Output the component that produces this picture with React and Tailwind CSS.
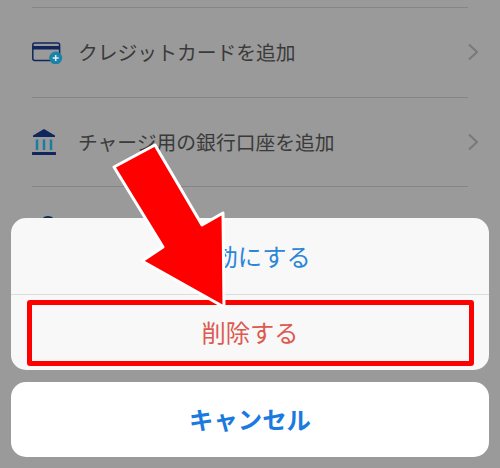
const jp = "font-['Noto_Sans_CJK_JP','Noto_Sans',sans-serif]";

function CardIcon() {
  return (
    <svg width="32" height="24" viewBox="0 0 32 24" className="shrink-0">
      <rect x="0.8" y="3" width="26.800" height="17.600" rx="2" fill="none" stroke="#10265c" strokeWidth="1.500" />
      <rect x="0.800" y="6" width="26.800" height="3.500" fill="#10265c" />
      <circle cx="23.700" cy="18" r="6.500" fill="#1a83a8" />
      <path d="M23.700 15v6M20.700 18h6" stroke="#e6eef2" strokeWidth="1.500" />
    </svg>
  );
}

function BankIcon() {
  return (
    <svg width="24" height="26" viewBox="0 0 24 26" className="shrink-0">
      <path d="M12 0 L23 6.500 L23 8 L1 8 L1 6.500 Z" fill="#10265c" />
      <path d="M5 10.500v10.500M12 10.500v10.500M19 10.500v10.500" stroke="#1a7da3" strokeWidth="2.500" />
      <rect x="0" y="23" width="24" height="3" rx="0.500" fill="#10265c" />
    </svg>
  );
}

// only the top of this one shows above the sheet
function RoundIcon() {
  return (
    <svg width="24" height="30" viewBox="0 0 24 30" className="shrink-0">
      <circle cx="16" cy="8" r="8" fill="#10265c" />
    </svg>
  );
}

function Chevron() {
  return (
    <svg width="10" height="18" viewBox="0 0 10 18" className="-mr-[10px] shrink-0">
      <path d="M1 1.500 L9 9 L1 16.500" fill="none" stroke="#797979" strokeWidth="2" />
    </svg>
  );
}

function Row({ icon, label }) {
  return (
    <div className="flex h-[89.5px] items-center border-b border-[#858585]">
      <div className="w-[46px]">{icon}</div>
      <span className="flex-1 text-[19.8px] text-[#3a3a3a]">{label}</span>
      {label && <Chevron />}
    </div>
  );
}

export default function App() {
  return (
    <div className={`relative h-[468px] w-[500px] overflow-hidden bg-[#9a9a9a] ${jp}`}>
      <div className="ml-8 mr-8 mt-[7px] border-t border-[#858585]">
        <Row icon={<CardIcon />} label="クレジットカードを追加" />
        <Row icon={<BankIcon />} label="チャージ用の銀行口座を追加" />
        <Row icon={<RoundIcon />} label="" />
      </div>

      <div className="absolute inset-x-[11px] bottom-[11px] flex flex-col gap-[12px]">
        <div className="rounded-[15px] bg-[#f8f8f8]">
          <div className="flex h-[77px] items-center justify-center border-b border-[#dcdcdc] text-[24.3px] text-[#2b86d8]">
            無効にする
          </div>
          <div className="flex h-[75px] items-center justify-center text-[24.3px] text-[#dc5a50]">削除する</div>
        </div>
        <div className="flex h-[75px] items-center justify-center rounded-[15px] bg-white text-[24.4px] font-bold text-[#1a7ae0]">
          キャンセル
        </div>
      </div>

      <div className="absolute left-[27px] top-[300px] h-[66px] w-[447px] rounded-[3px] border-[5px] border-[#f00]" />

      <svg className="absolute left-0 top-0" width="500" height="468" viewBox="0 0 500 468">
        <path
          d="M155 145 L114 167 L163 247 L142 261 L224 307 L223 213 L202 225 Z"
          fill="#f00"
          stroke="#fff"
          strokeWidth="3"
          strokeLinejoin="round"
        />
      </svg>
    </div>
  );
}
